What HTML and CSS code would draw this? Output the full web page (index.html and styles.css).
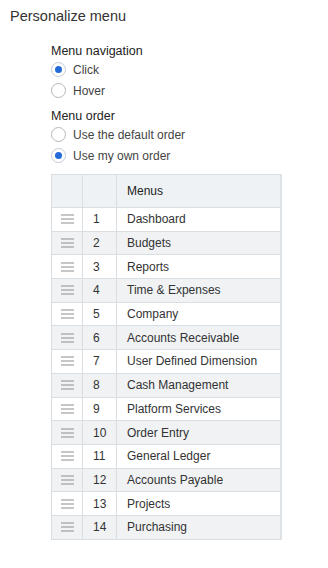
FILE: index.html
```html
<!DOCTYPE html>
<html lang="en">
<head>
    <meta charset="UTF-8">
    <meta name="viewport" content="width=device-width, initial-scale=1.0">
    <title>Personalize menu</title>
    <link rel="stylesheet" href="styles.css">
</head>
<body>
    <h1 class="page-title">Personalize menu</h1>

    <div class="settings">
        <div class="group">
            <div class="group-label">Menu navigation</div>
            <label class="radio"><span class="dot checked"></span>Click</label>
            <label class="radio"><span class="dot"></span>Hover</label>
        </div>

        <div class="group">
            <div class="group-label">Menu order</div>
            <label class="radio"><span class="dot"></span>Use the default order</label>
            <label class="radio"><span class="dot checked"></span>Use my own order</label>
        </div>

        <table class="menu-table">
            <thead>
                <tr>
                    <th class="col-drag"></th>
                    <th class="col-num"></th>
                    <th class="col-name">Menus</th>
                </tr>
            </thead>
            <tbody id="menu-rows"></tbody>
        </table>
    </div>

    <script>
        const menus = [
            'Dashboard', 'Budgets', 'Reports', 'Time &amp; Expenses', 'Company',
            'Accounts Receivable', 'User Defined Dimension', 'Cash Management',
            'Platform Services', 'Order Entry', 'General Ledger',
            'Accounts Payable', 'Projects', 'Purchasing'
        ];

        const handle = '<svg width="13" height="10" viewBox="0 0 13 10">' +
            '<path d="M0 1h13M0 5h13M0 9h13" stroke="#8e8e8e" stroke-width="1.2"/></svg>';

        // build the rows
        document.getElementById('menu-rows').innerHTML = menus.map(function (name, i) {
            return '<tr><td class="col-drag">' + handle + '</td>' +
                '<td class="col-num">' + (i + 1) + '</td>' +
                '<td class="col-name">' + name + '</td></tr>';
        }).join('');
    </script>
</body>
</html>
```

FILE: styles.css
```css
body {
    font-family: "Liberation Sans", Arial, sans-serif;
    background-color: #fff;
    color: #333;
    margin: 0;
    padding: 6px 0 0 10px;
}

.page-title {
    font-size: 14.5px;
    font-weight: normal;
    line-height: 20px;
    margin: 0;
    color: #333;
}

.settings {
    margin-left: 41px;
    padding-top: 18px;
}

.group {
    margin-bottom: 8px;
}

.group-label {
    font-size: 12.5px;
    line-height: 15px;
    color: #222;
}

.radio {
    display: flex;
    align-items: center;
    height: 21px;
    font-size: 12px;
    color: #444;
}

.dot {
    box-sizing: border-box;
    width: 15px;
    height: 15px;
    margin-right: 7px;
    border: 1px solid #b4b8bc;
    border-radius: 50%;
    background: #fff;
    display: flex;
    align-items: center;
    justify-content: center;
}

.dot.checked {
    border-color: #c3cbd4;
}

.dot.checked::after {
    content: "";
    width: 7px;
    height: 7px;
    border-radius: 50%;
    background-color: #2369d8;
}

.menu-table {
    margin-top: 4px;
    width: 231px;
    border-collapse: collapse;
    border: 1px solid #d5dade;
    border-right: 2px solid #dde2e6;
    font-size: 12px;
}

.menu-table th,
.menu-table td {
    border: 1px solid #d9dee2;
    padding: 0;
    text-align: left;
    vertical-align: middle;
}

.menu-table th {
    height: 32px;
    background-color: #eff2f4;
    font-weight: normal;
    color: #222;
}

.menu-table th.col-name {
    padding-left: 6px;
}

.menu-table td {
    height: 22.7px;
    color: #333;
}

.menu-table tbody tr:nth-child(even) td {
    background-color: #f0f2f4;
}

.col-drag {
    width: 30px;
}

.col-drag svg {
    display: block;
    margin: 0 auto;
}

.col-num {
    width: 23px;
    padding-left: 10px !important;
}

.col-name {
    padding-left: 10px !important;
}
```
